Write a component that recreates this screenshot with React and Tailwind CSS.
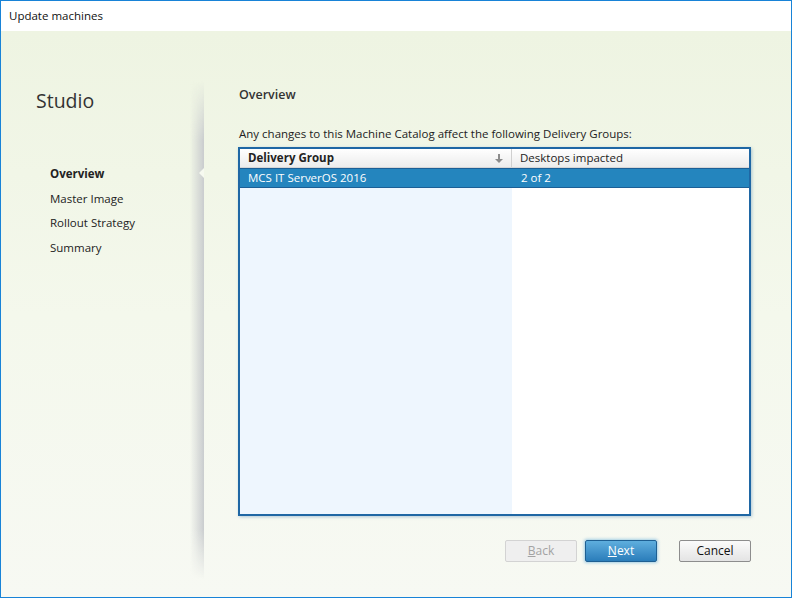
const font = { fontFamily: '"Open Sans", "Noto Sans", sans-serif' }

function SortArrow() {
  return (
    <svg width="8" height="9" viewBox="0 0 8 9" className="text-[#8c8c8c]">
      <path d="M3 0h2v5h3L4 9 0 5h3z" fill="currentColor" />
    </svg>
  )
}

function Sidebar() {
  const steps = ['Overview', 'Master Image', 'Rollout Strategy', 'Summary']
  return (
    <div className="relative w-[203px] shrink-0">
      <div className="pl-[35px] pt-[57px] text-[19.5px] leading-[26px] text-[#333]">Studio</div>
      <div className="mt-[48px] pl-[49px]">
        {steps.map((s, i) => (
          <div
            key={s}
            className={`h-[24.6px] text-[11.5px] leading-[24.6px] text-[#222] ${i === 0 ? 'font-bold' : ''}`}
          >
            {s}
          </div>
        ))}
      </div>
      {/* panel shadow */}
      <div className="absolute right-0 top-[50px] bottom-[18px] w-[14px] bg-gradient-to-r from-transparent to-[#c9ccce] [mask-image:linear-gradient(to_bottom,transparent,black_12%,black_90%,transparent)]" />
      {/* current step pointer */}
      <div className="absolute right-0 top-[137px] w-0 h-0 border-y-[5px] border-y-transparent border-r-[5px] border-r-[#f6f9f0]" />
    </div>
  )
}

function Button({ children, kind }) {
  const styles = {
    disabled: 'border-[#d3d3d3] bg-[#efefef] text-[#a3a3a3]',
    primary:
      'border-[#1e5f92] bg-gradient-to-b from-[#5eaede] to-[#2a7dba] text-white shadow-[0_0_3px_1px_rgba(60,150,210,0.45)]',
    normal: 'border-[#8d8d8d] bg-gradient-to-b from-[#fbfbfb] to-[#e4e4e4] text-[#111]',
  }
  return (
    <div
      className={`flex h-[22px] w-[72px] items-center justify-center rounded-[2px] border text-[12px] ${styles[kind]}`}
    >
      {children}
    </div>
  )
}

function DeliveryTable() {
  return (
    <div className="flex h-[369px] w-[513px] flex-col border-2 border-[#1f67a4] bg-white shadow-[1px_1px_3px_rgba(40,110,170,0.35)]">
      <div className="flex h-[19px] border-b border-[#d6d6d6] bg-gradient-to-b from-white to-[#ececec] text-[11.5px] leading-[18px] text-[#222]">
        <div className="flex w-[272px] items-center justify-between border-r border-[#d0d0d0] pl-[8px] pr-[8px]">
          <span className="font-bold">Delivery Group</span>
          <SortArrow />
        </div>
        <div className="pl-[8px]">Desktops impacted</div>
      </div>
      <div className="flex h-[20px] border-y border-[#1b5f96] bg-[#2485be] text-[11.5px] leading-[18px] text-white">
        <div className="w-[272px] pl-[8px]">MCS IT ServerOS 2016</div>
        <div className="pl-[9px]">2 of 2</div>
      </div>
      <div className="flex flex-1">
        <div className="w-[272px] bg-[#eef6fe]" />
        <div className="flex-1 bg-white" />
      </div>
    </div>
  )
}

export default function App() {
  return (
    <div
      style={font}
      className="flex h-[598px] w-[792px] flex-col border border-[#1883d7] bg-white"
    >
      <div className="h-[30px] bg-white pl-[8px] text-[11.5px] leading-[30px] text-[#111]">Update machines</div>
      <div className="flex flex-1 bg-gradient-to-b from-[#eef4e2] via-[#f4f8ec] to-[#f7f9f3]">
        <Sidebar />
        <div className="flex flex-1 flex-col pl-[34px] pr-[39px]">
          <div className="pl-[1px] pt-[55px] text-[12.5px] font-semibold leading-[18px] text-[#333]">Overview</div>
          <div className="mt-[22px] pl-[1px] text-[11.5px] leading-[16px] text-[#222]">
            Any changes to this Machine Catalog affect the following Delivery Groups:
          </div>
          <div className="mt-[5px]">
            <DeliveryTable />
          </div>
          <div className="mr-[1px] mt-[24px] flex justify-end gap-[8px]">
            <Button kind="disabled">
              <span><span className="underline">B</span>ack</span>
            </Button>
            <Button kind="primary">
              <span><span className="underline">N</span>ext</span>
            </Button>
            <div className="w-[6px]" />
            <Button kind="normal">Cancel</Button>
          </div>
        </div>
      </div>
    </div>
  )
}
